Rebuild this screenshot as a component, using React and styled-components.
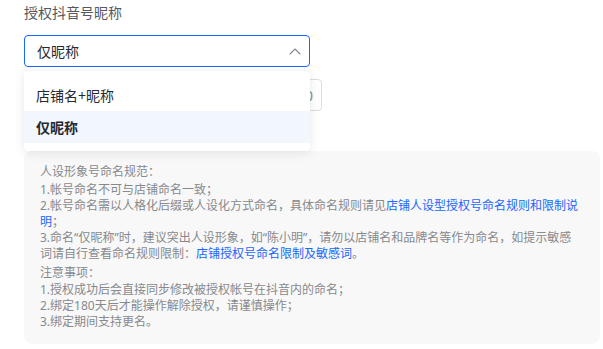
import React, { useState } from 'react';
import styled, { createGlobalStyle } from 'styled-components';

const GlobalStyle = createGlobalStyle`
  body {
    margin: 0;
    background: #fff;
    font-family: "Noto Sans", "Noto Sans CJK SC", sans-serif;
  }
`;

const Page = styled.div`
  padding: 3px 3px 4px 24px;
  display: flex;
  flex-direction: column;
`;

const Label = styled.div`
  font-size: 14px;
  line-height: 20px;
  color: #55585e;
  margin-bottom: 12px;
`;

const SelectWrap = styled.div`
  position: relative;
  width: 286px;
  z-index: 5;
`;

const SelectBox = styled.div`
  box-sizing: border-box;
  height: 32px;
  border: 1px solid #1966ff;
  border-radius: 4px;
  display: flex;
  align-items: center;
  justify-content: space-between;
  padding: 0 8px 0 12px;
  font-size: 14px;
  color: #252931;
  background: #fff;
`;

const Menu = styled.div`
  position: absolute;
  top: calc(100% + 4px);
  left: 0;
  width: 100%;
  box-sizing: border-box;
  padding: 8px 0;
  background: #fff;
  border-radius: 4px;
  box-shadow: 0 2px 12px rgba(0, 0, 0, 0.09), 0 0 1px rgba(0, 0, 0, 0.08);
`;

const Option = styled.div`
  height: 32px;
  display: flex;
  align-items: center;
  padding: 0 12px;
  font-size: 14px;
  color: #252931;
  font-weight: ${({ active }) => (active ? 600 : 400)};
  background: ${({ active }) => (active ? '#f2f6fd' : 'transparent')};
`;

const Input = styled.div`
  box-sizing: border-box;
  margin-top: 12px;
  width: 298px;
  height: 32px;
  border: 1px solid #dcdde0;
  border-radius: 4px;
  display: flex;
  align-items: center;
  justify-content: flex-end;
  padding: 0 8px;
  font-size: 14px;
  color: #86898f;
`;

const Notice = styled.div`
  margin-top: 40px;
  background: #f8f8f8;
  border-radius: 8px;
  padding: 13px 19px 14px 16px;
  font-size: 12px;
  line-height: 16px;
  color: #87898d;
`;

const Block = styled.div`
  & + & {
    margin-top: 3px;
  }
`;

const Title = styled.div`
  margin-bottom: 1.5px;
`;

const A = styled.span`
  color: #1966ff;
`;

const Chevron = () => (
  <svg width="12" height="7" viewBox="0 0 12 7" fill="none">
    <polyline points="1,6 6,1 11,6" stroke="#86898f" strokeWidth="1.1" strokeLinecap="round" strokeLinejoin="round" />
  </svg>
);

export default function App() {
  const [value] = useState('仅昵称');
  const options = ['店铺名+昵称', '仅昵称'];

  return (
    <>
      <GlobalStyle />
      <Page>
        <Label>授权抖音号昵称</Label>
        <SelectWrap>
          <SelectBox>
            <span>{value}</span>
            <Chevron />
          </SelectBox>
          <Menu>
            {options.map((o) => (
              <Option key={o} active={o === value}>{o}</Option>
            ))}
          </Menu>
        </SelectWrap>
        <Input>0/20</Input>
        <Notice>
          <Block>
            <Title>人设形象号命名规范：</Title>
            <div>1.帐号命名不可与店铺命名一致；</div>
            <div>2.帐号命名需以人格化后缀或人设化方式命名，具体命名规则请见<A>店铺人设型授权号命名规则和限制说明</A>；</div>
            <div>3.命名“仅昵称”时，建议突出人设形象，如“陈小明”，请勿以店铺名和品牌名等作为命名，如提示敏感词请自行查看命名规则限制：<A>店铺授权号命名限制及敏感词</A>。</div>
          </Block>
          <Block>
            <Title>注意事项：</Title>
            <div>1.授权成功后会直接同步修改被授权帐号在抖音内的命名；</div>
            <div>2.绑定180天后才能操作解除授权，请谨慎操作；</div>
            <div>3.绑定期间支持更名。</div>
          </Block>
        </Notice>
      </Page>
    </>
  );
}
